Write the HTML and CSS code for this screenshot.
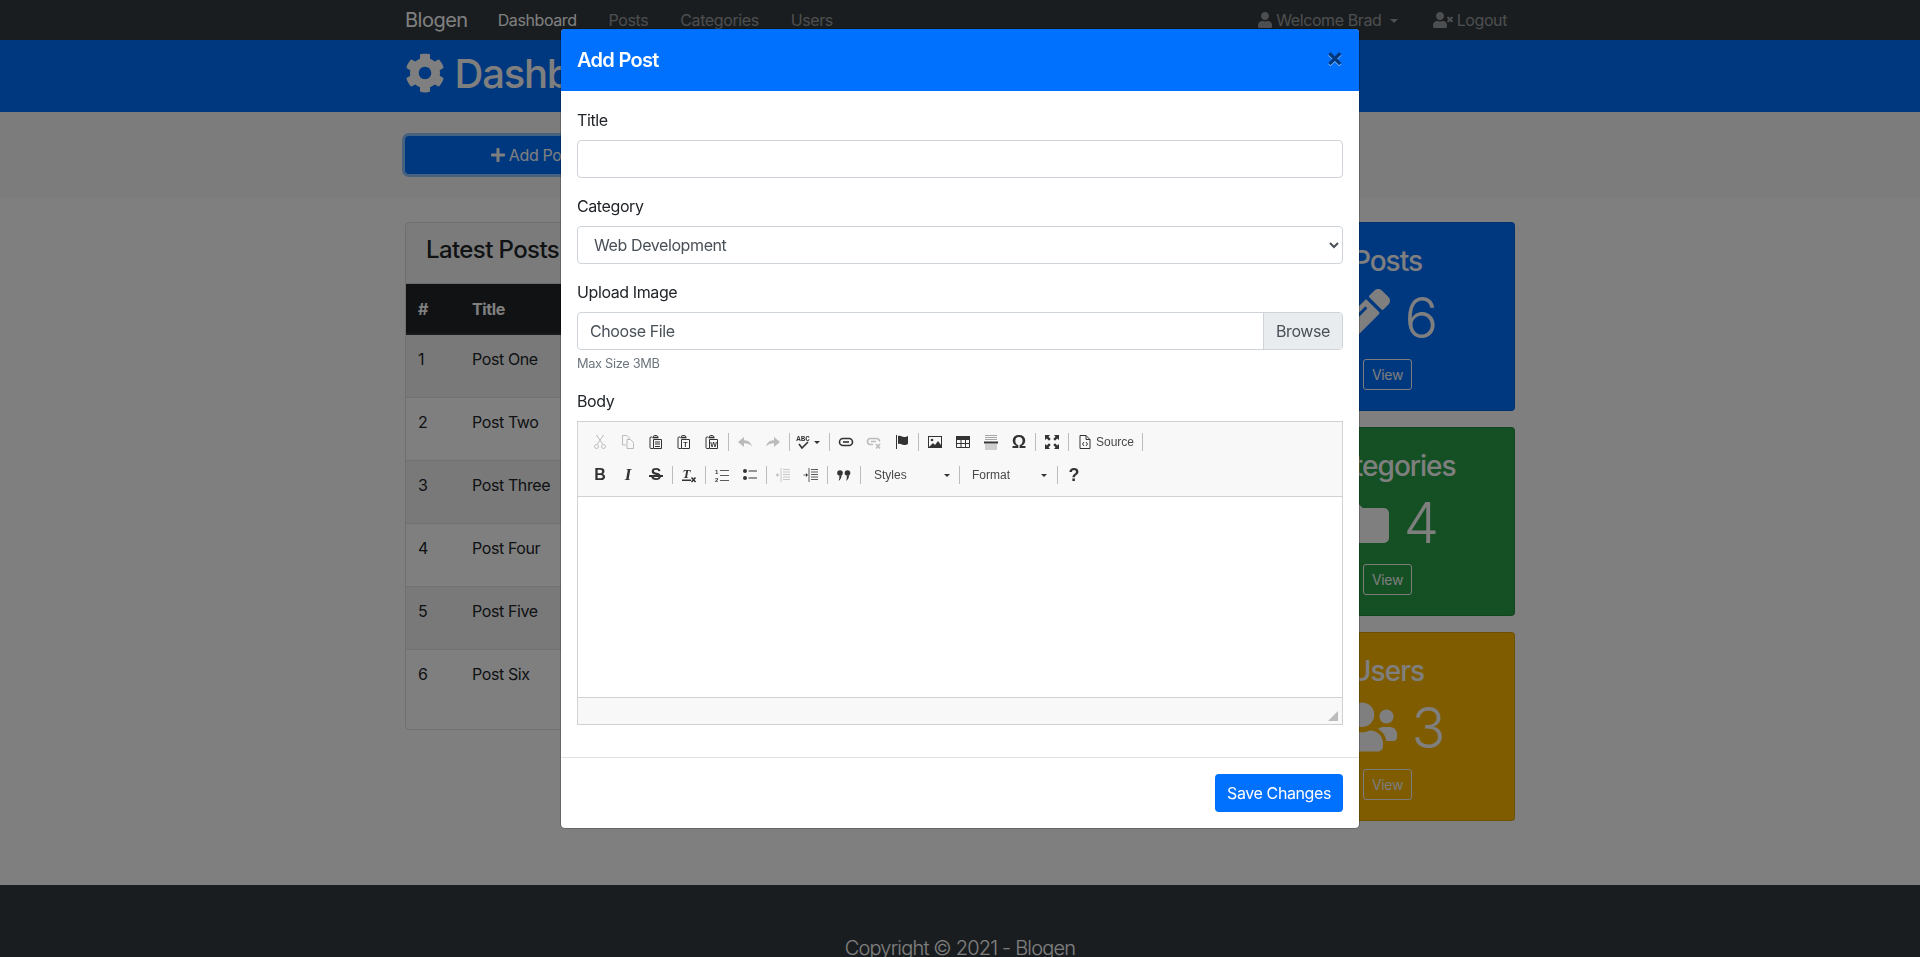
FILE: index.html
```html
<!DOCTYPE html>
<html lang="en">
<head>
<meta charset="UTF-8">
<meta name="viewport" content="width=device-width, initial-scale=1.0">
<title>Blogen Admin</title>
<link rel="stylesheet" href="styles.css">
</head>

<body>
<nav class="navbar">
    <div class="container navbar-inner">
        <a class="brand">Blogen</a>
        <a class="nav-link active">Dashboard</a>
        <a class="nav-link">Posts</a>
        <a class="nav-link">Categories</a>
        <a class="nav-link">Users</a>
        <a class="nav-link push-right">
            <svg class="fa" viewBox="0 0 448 512"><path d="M224 256c70.7 0 128-57.3 128-128S294.7 0 224 0 96 57.3 96 128s57.3 128 128 128zm89.6 32h-16.7c-22.2 10.2-46.9 16-72.9 16s-50.6-5.8-72.9-16h-16.7C60.2 288 0 348.2 0 422.4V464c0 26.5 21.5 48 48 48h352c26.5 0 48-21.5 48-48v-41.6c0-74.2-60.2-134.4-134.4-134.4z"/></svg>
            Welcome Brad <span class="caret"></span>
        </a>
        <a class="nav-link last">
            <svg class="fa" viewBox="0 0 640 512"><path d="M589.6 240l45.6-45.6c6.3-6.3 6.3-16.5 0-22.8l-22.8-22.8c-6.3-6.3-16.5-6.3-22.8 0L544 194.4l-45.6-45.6c-6.3-6.3-16.5-6.3-22.8 0l-22.8 22.8c-6.3 6.3-6.3 16.5 0 22.8l45.6 45.6-45.6 45.6c-6.3 6.3-6.3 16.5 0 22.8l22.8 22.8c6.3 6.3 16.5 6.3 22.8 0l45.6-45.6 45.6 45.6c6.3 6.3 16.5 6.3 22.8 0l22.8-22.8c6.3-6.3 6.3-16.5 0-22.8L589.6 240zM224 256c70.7 0 128-57.3 128-128S294.7 0 224 0 96 57.3 96 128s57.3 128 128 128zm89.6 32h-16.7c-22.2 10.2-46.9 16-72.9 16s-50.6-5.8-72.9-16h-16.7C60.2 288 0 348.2 0 422.4V464c0 26.5 21.5 48 48 48h352c26.5 0 48-21.5 48-48v-41.6c0-74.2-60.2-134.4-134.4-134.4z"/></svg>
            Logout
        </a>
    </div>
</nav>

<header class="page-header">
    <div class="container">
        <h1>
            <svg class="fa" viewBox="0 0 512 512"><path d="M487.4 315.7l-42.6-24.6c4.3-23.2 4.3-47 0-70.2l42.6-24.6c4.9-2.8 7.1-8.6 5.5-14-11.1-35.6-30-67.8-54.7-94.6-3.8-4.1-10-5.1-14.8-2.3L380.8 110c-17.9-15.4-38.5-27.3-60.8-35.1V25.8c0-5.6-3.9-10.5-9.4-11.7-36.7-8.2-74.3-7.8-109.2 0-5.5 1.2-9.4 6.1-9.4 11.7V75c-22.2 7.9-42.8 19.8-60.8 35.1L88.7 85.5c-4.9-2.8-11-1.9-14.8 2.3-24.7 26.7-43.6 58.9-54.7 94.6-1.7 5.4.6 11.2 5.5 14L67.3 221c-4.3 23.2-4.3 47 0 70.2l-42.6 24.6c-4.9 2.8-7.1 8.6-5.5 14 11.1 35.6 30 67.8 54.7 94.6 3.8 4.1 10 5.1 14.8 2.3l42.6-24.6c17.9 15.4 38.5 27.3 60.8 35.1v49.2c0 5.6 3.9 10.5 9.4 11.7 36.7 8.2 74.3 7.8 109.2 0 5.5-1.2 9.4-6.1 9.4-11.7v-49.2c22.2-7.9 42.8-19.8 60.8-35.1l42.6 24.6c4.9 2.8 11 1.9 14.8-2.3 24.7-26.7 43.6-58.9 54.7-94.6 1.5-5.5-.7-11.3-5.6-14.1zM256 336c-44.1 0-80-35.9-80-80s35.9-80 80-80 80 35.9 80 80-35.9 80-80 80z"/></svg>
            Dashboard
        </h1>
    </div>
</header>

<section class="actions">
    <div class="container">
        <a class="btn-add">
            <svg class="fa" viewBox="0 0 448 512"><path d="M416 208H272V64c0-17.67-14.33-32-32-32h-32c-17.67 0-32 14.33-32 32v144H32c-17.67 0-32 14.33-32 32v32c0 17.67 14.33 32 32 32h144v144c0 17.67 14.33 32 32 32h32c17.67 0 32-14.33 32-32V304h144c17.67 0 32-14.33 32-32v-32c0-17.67-14.33-32-32-32z"/></svg>
            Add Post
        </a>
    </div>
</section>

<main class="container content">
    <div class="posts-card">
        <h4 class="posts-title">Latest Posts</h4>
        <table class="posts-table">
            <thead>
                <tr><th class="col-num">#</th><th>Title</th></tr>
            </thead>
            <tbody>
                <tr><td>1</td><td>Post One</td></tr>
                <tr><td>2</td><td>Post Two</td></tr>
                <tr><td>3</td><td>Post Three</td></tr>
                <tr><td>4</td><td>Post Four</td></tr>
                <tr><td>5</td><td>Post Five</td></tr>
                <tr><td>6</td><td>Post Six</td></tr>
            </tbody>
        </table>
    </div>

    <div class="stats">
        <div class="stat stat-blue">
            <h3>Posts</h3>
            <div class="stat-num">
                <svg class="fa" viewBox="0 0 512 512"><path d="M497.9 142.1l-46.1 46.1c-4.7 4.7-12.3 4.7-17 0l-111-111c-4.7-4.7-4.7-12.3 0-17l46.1-46.1c18.7-18.7 49.1-18.7 67.9 0l60.1 60.1c18.8 18.7 18.8 49.1 0 67.9zM284.2 99.8L21.6 362.4.4 483.9c-2.9 16.4 11.4 30.6 27.8 27.8l121.5-21.3 262.6-262.6c4.7-4.7 4.7-12.3 0-17l-111-111c-4.8-4.7-12.4-4.7-17.1 0zM124.1 339.9c-5.5-5.5-5.5-14.3 0-19.8l154-154c5.5-5.5 14.3-5.5 19.8 0s5.5 14.3 0 19.8l-154 154c-5.5 5.5-14.3 5.5-19.8 0zM88 424h48v36.3l-64.5 11.3-31.1-31.1L51.7 376H88v48z"/></svg>
                6
            </div>
            <a class="btn-view">View</a>
        </div>
        <div class="stat stat-green">
            <h3>Categories</h3>
            <div class="stat-num">
                <svg class="fa" viewBox="0 0 512 512"><path d="M464 128H272l-64-64H48C21.49 64 0 85.49 0 112v288c0 26.51 21.49 48 48 48h416c26.51 0 48-21.49 48-48V176c0-26.51-21.49-48-48-48z"/></svg>
                4
            </div>
            <a class="btn-view">View</a>
        </div>
        <div class="stat stat-yellow">
            <h3>Users</h3>
            <div class="stat-num">
                <svg class="fa" viewBox="0 0 640 512"><path d="M96 224c35.3 0 64-28.7 64-64s-28.7-64-64-64-64 28.7-64 64 28.7 64 64 64zm448 0c35.3 0 64-28.7 64-64s-28.7-64-64-64-64 28.7-64 64 28.7 64 64 64zm32 32h-64c-17.6 0-33.5 7.1-45.1 18.6 40.3 22.1 68.9 62 75.1 109.4h66c17.7 0 32-14.3 32-32v-32c0-35.3-28.7-64-64-64zm-256 0c61.9 0 112-50.1 112-112S381.9 32 320 32 208 82.1 208 144s50.1 112 112 112zm76.8 32h-8.3c-20.8 10-43.9 16-68.5 16s-47.6-6-68.5-16h-8.3C179.6 288 128 339.6 128 403.2V432c0 26.5 21.5 48 48 48h288c26.5 0 48-21.5 48-48v-28.8c0-63.6-51.6-115.2-115.2-115.2zm-223.7-13.4C161.5 263.1 145.6 256 128 256H64c-35.3 0-64 28.7-64 64v32c0 17.7 14.3 32 32 32h65.9c6.3-47.4 34.9-87.3 75.2-109.4z"/></svg>
                3
            </div>
            <a class="btn-view">View</a>
        </div>
    </div>
</main>

<footer class="footer">
    <p>Copyright &copy; 2021 - Blogen</p>
</footer>

<div class="backdrop"></div>

<div class="modal">
    <div class="modal-box">
        <div class="modal-header">
            <h5>Add Post</h5>
            <span class="close">&times;</span>
        </div>
        <div class="modal-body">
            <div class="form-group">
                <label>Title</label>
                <input class="form-control" type="text">
            </div>
            <div class="form-group">
                <label>Category</label>
                <select class="form-control form-select">
                    <option>Web Development</option>
                </select>
            </div>
            <div class="form-group">
                <label>Upload Image</label>
                <div class="file-input">
                    <span class="file-name">Choose File</span>
                    <span class="file-browse">Browse</span>
                </div>
                <small class="hint">Max Size 3MB</small>
            </div>
            <div class="form-group">
                <label>Body</label>
                <div class="editor">
                    <div class="toolbar">
                        <div class="tool-row">
                            <span class="tool off"><svg class="ico" viewBox="0 0 16 16"><path class="ln" d="M4.5 1l6 9M11.5 1l-6 9"/><circle class="ln" cx="4.5" cy="12.5" r="2"/><circle class="ln" cx="11.5" cy="12.5" r="2"/></svg></span>
                            <span class="tool off"><svg class="ico" viewBox="0 0 16 16"><path class="ln" d="M6 11H2.500V1.500H7L9 3.500V5M7 5.500h3.500l3 3v6H7z"/></svg></span>
                            <span class="tool"><svg class="ico" viewBox="0 0 16 16"><path class="ln" d="M4 3H3a1 1 0 0 0-1 1v9.500a1 1 0 0 0 1 1h2M5.500 3.500v-1a1 1 0 0 1 1-1h2a1 1 0 0 1 1 1v1"/><path class="ln-bold" d="M4.500 3.500h6"/><path class="ln" d="M5.500 5.500h8v9h-8z"/><path class="ln" d="M7 8h5M7 10h5M7 12.500h5"/></svg></span>
                            <span class="tool"><svg class="ico" viewBox="0 0 16 16"><path class="ln" d="M4 3H3a1 1 0 0 0-1 1v9.500a1 1 0 0 0 1 1h2M5.500 3.500v-1a1 1 0 0 1 1-1h2a1 1 0 0 1 1 1v1"/><path class="ln-bold" d="M4.500 3.500h6"/><path class="ln" d="M5.500 5.500h8v9h-8z"/><text class="ico-letter" x="9.500" y="13">T</text></svg></span>
                            <span class="tool"><svg class="ico" viewBox="0 0 16 16"><path class="ln" d="M4 3H3a1 1 0 0 0-1 1v9.500a1 1 0 0 0 1 1h2M5.500 3.500v-1a1 1 0 0 1 1-1h2a1 1 0 0 1 1 1v1"/><path class="ln-bold" d="M4.500 3.500h6"/><path class="ln" d="M5.500 5.500h8v9h-8z"/><text class="ico-letter" x="9.500" y="13">W</text></svg></span>
                            <span class="tool-sep"></span>
                            <span class="tool off"><svg class="ico" viewBox="0 0 16 16"><path d="M1 8l6-5v3.200c4 0 7 2 8 6.300-2-2.300-4.500-3.200-8-3.200V13z"/></svg></span>
                            <span class="tool off"><svg class="ico" viewBox="0 0 16 16"><path d="M15 8L9 3v3.200c-4 0-7 2-8 6.300 2-2.300 4.500-3.200 8-3.200V13z"/></svg></span>
                            <span class="tool-sep"></span>
                            <span class="tool tool-spell"><svg class="ico" viewBox="0 0 16 16"><text class="ico-abc" x="8" y="7">ABC</text><path class="ln-bold" d="M4 10l3 4 6-6"/></svg><span class="arrow"></span></span>
                            <span class="tool-sep"></span>
                            <span class="tool"><svg class="ico" viewBox="0 0 16 16"><rect class="ln-bold" x="1.500" y="4.500" width="13" height="7" rx="3.500"/><path class="ln-bold" d="M5 8h6"/></svg></span>
                            <span class="tool off"><svg class="ico" viewBox="0 0 16 16"><path class="ln-bold" d="M7 10.500H4.500a3 3 0 0 1 0-6h6a3 3 0 0 1 3 3"/><path class="ln-bold" d="M5 7.500h5M10 10l4 4.500M14 10l-4 4.500"/></svg></span>
                            <span class="tool"><svg class="ico" viewBox="0 0 16 16"><path d="M2 1h1v14H2zM4 2c3-1 4 1 6 1s3-.5 4-1v8c-1 .5-2 1-4 1S7 9 4 10z"/></svg></span>
                            <span class="tool-sep"></span>
                            <span class="tool"><svg class="ico" viewBox="0 0 16 16"><rect class="ln" x="1.500" y="2.500" width="13" height="11"/><circle cx="5" cy="6" r="1.300"/><path d="M2 13l4-4 2 2 3-4 3 4v2z"/></svg></span>
                            <span class="tool"><svg class="ico" viewBox="0 0 16 16"><rect x="1" y="2" width="14" height="4"/><path class="ln" d="M1.500 5v8.500h13V5M1.500 9.500h13M6 6v7.500M10.500 6v7.500"/></svg></span>
                            <span class="tool"><svg class="ico" viewBox="0 0 16 16"><path class="ln-faint" d="M2 1.500h12M2 3.500h12M2 5.500h12M2 11h12M2 13h12M2 15h12"/><rect x="1" y="7.500" width="14" height="2"/></svg></span>
                            <span class="tool"><span class="glyph glyph-omega">&Omega;</span></span>
                            <span class="tool-sep"></span>
                            <span class="tool"><svg class="ico" viewBox="0 0 16 16"><path d="M1 1h5L4.500 2.800 6.700 5 5 6.700 2.800 4.500 1 6zM15 1v5l-1.800-1.500L11 6.700 9.300 5l2.200-2.200L10 1zM1 15v-5l1.800 1.500L5 9.300 6.700 11l-2.200 2.200L6 15zM15 15h-5l1.500-1.800L9.300 11l1.700-1.700 2.200 2.200L15 10z"/></svg></span>
                            <span class="tool-sep"></span>
                            <span class="tool tool-source"><svg class="ico" viewBox="0 0 16 16"><path class="ln" d="M3 1.500h6l4 4v9H3zM9 1.500v4h4"/><path class="ln" d="M7 8L5.500 10 7 12M9 8l1.500 2L9 12"/></svg><span class="tool-label">Source</span></span>
                            <span class="tool-sep"></span>
                        </div>
                        <div class="tool-row">
                            <span class="tool"><span class="glyph glyph-b">B</span></span>
                            <span class="tool"><span class="glyph glyph-i">I</span></span>
                            <span class="tool"><span class="glyph glyph-s">S</span></span>
                            <span class="tool-sep"></span>
                            <span class="tool"><svg class="ico" viewBox="0 0 16 16"><text class="ico-tx" x="1.500" y="11">T</text><rect x="1" y="12.500" width="9" height="1.500"/><path class="ln-bold" d="M10.500 10.500l4 4.500M14.500 10.500l-4 4.500"/></svg></span>
                            <span class="tool-sep"></span>
                            <span class="tool"><svg class="ico" viewBox="0 0 16 16"><text class="ico-num" x="1" y="6.500">1</text><text class="ico-num" x="1" y="14.500">2</text><path class="ln-thin" d="M6 3.500h9M6 8.500h9M6 13.500h9"/></svg></span>
                            <span class="tool"><svg class="ico" viewBox="0 0 16 16"><circle cx="3" cy="4" r="2"/><circle cx="3" cy="11" r="2"/><path class="ln" d="M6.500 4h8.500M6.500 11h8.500"/></svg></span>
                            <span class="tool-sep"></span>
                            <span class="tool off"><svg class="ico" viewBox="0 0 16 16"><path class="ln-thin" d="M8 2.500h7M8 5h7M8 7.500h7M8 10h7M8 12.500h7M6 1v14M1 8h3.500"/><path d="M1 8l2-2v4z"/></svg></span>
                            <span class="tool"><svg class="ico" viewBox="0 0 16 16"><path class="ln-thin" d="M8 2.500h7M8 5h7M8 7.500h7M8 10h7M8 12.500h7M6 1v14M0.500 8H4"/><path d="M5 8L3 6v4z"/></svg></span>
                            <span class="tool-sep"></span>
                            <span class="tool"><svg class="ico" viewBox="0 0 16 16"><circle cx="4" cy="6" r="2.800"/><path d="M5.500 8c.3 2-.8 4.500-3 6 .8-1.500 1-3 .8-5z"/><circle cx="11.500" cy="6" r="2.800"/><path d="M13 8c.3 2-.8 4.500-3 6 .8-1.500 1-3 .8-5z"/></svg></span>
                            <span class="tool-sep"></span>
                            <span class="combo combo-styles"><span class="tool-label">Styles</span><span class="arrow"></span></span>
                            <span class="tool-sep"></span>
                            <span class="combo combo-format"><span class="tool-label">Format</span><span class="arrow"></span></span>
                            <span class="tool-sep"></span>
                            <span class="tool"><span class="glyph glyph-help">?</span></span>
                        </div>
                    </div>
                    <div class="editor-area"></div>
                    <div class="editor-foot"><span class="resizer"></span></div>
                </div>
            </div>
        </div>
        <div class="modal-footer">
            <a class="btn-save">Save Changes</a>
        </div>
    </div>
</div>
</body>
</html>
```

FILE: styles.css
```css
* {
    box-sizing: border-box;
    letter-spacing: -.025em;
}
html, body {
    height: 100%;
}
body {
    margin: 0;
    overflow: hidden;
    font-family: Inter, "Liberation Sans", sans-serif;
    font-size: 16px;
    line-height: 1.5;
    color: #212529;
    background-color: #fff;
}
.container {
    width: 1110px;
    margin: 0 auto;
}
.fa {
    height: 1em;
    width: auto;
    fill: currentColor;
    vertical-align: -0.125em;
}

/* navbar */
.navbar {
    background-color: #343a40;
    height: 40px;
}
.navbar-inner {
    display: flex;
    align-items: center;
    height: 40px;
}
.brand {
    color: #fff;
    font-size: 20px;
    margin-right: 14px;
}
.nav-link {
    color: rgba(255, 255, 255, .5);
    padding: 8px 16px;
}
.nav-link.active {
    color: #fff;
}
.nav-link.push-right {
    margin-left: auto;
}
.nav-link.last {
    padding: 8px 8px 8px 15px;
}
.caret {
    display: inline-block;
    margin: 0 4px 0 4px;
    vertical-align: 3px;
    border-top: 4px solid;
    border-left: 4px solid transparent;
    border-right: 4px solid transparent;
}

/* page header */
.page-header {
    background-color: #0070ff;
    color: #fff;
    height: 72px;
    padding-top: 10px;
}
.page-header h1 {
    margin: 0;
    font-size: 40px;
    font-weight: 500;
    line-height: 48px;
    letter-spacing: -.03em;
}
.actions {
    background-color: #f8f9fa;
    padding: 24px 0;
    height: 86px;
}
.btn-add {
    display: block;
    width: 255px;
    height: 38px;
    line-height: 38px;
    text-align: center;
    color: #fff;
    background-color: #0070ff;
    border-radius: 4px;
    box-shadow: 0 0 0 3px rgba(38, 143, 255, .5);
}

/* main content */
.content {
    display: grid;
    grid-template-columns: 825px 255px;
    gap: 30px;
    padding: 24px 0 16px;
    align-items: start;
}
.posts-card {
    border: 1px solid rgba(0, 0, 0, .125);
    border-radius: 4px;
    padding-bottom: 16px;
}
.posts-title {
    margin: 0;
    padding: 13px 20px 18px;
    font-size: 24px;
    font-weight: 500;
    line-height: 28.8px;
    background-color: rgba(0, 0, 0, .03);
    border-bottom: 1px solid rgba(0, 0, 0, .125);
}
.posts-table {
    width: 100%;
    border-collapse: collapse;
    table-layout: fixed;
}
.posts-table th {
    background-color: #212529;
    color: #fff;
    font-weight: 700;
    text-align: left;
    padding: 13px 12px 12px;
    border-bottom: 2px solid #32383e;
}
.posts-table th.col-num {
    width: 54px;
}
.posts-table td {
    height: 63px;
    padding: 12px;
    vertical-align: top;
    border-top: 1px solid #dee2e6;
}
.posts-table tbody tr:first-child td {
    height: 64px;
    border-top: 0;
}
.posts-table tbody tr:nth-child(odd) {
    background-color: rgba(0, 0, 0, .05);
}
.stats {
    display: flex;
    flex-direction: column;
    gap: 16px;
}
.stat {
    display: flex;
    flex-direction: column;
    align-items: center;
    height: 189px;
    padding: 22px 20px 0;
    border: 1px solid rgba(0, 0, 0, .125);
    border-radius: 4px;
    color: #fff;
}
.stat-blue {
    background-color: #0070ff;
}
.stat-green {
    background-color: #28a046;
}
.stat-yellow {
    background-color: #ffb900;
}
.stat h3 {
    margin: 0 0 6px;
    font-size: 28px;
    font-weight: 500;
    line-height: 33.6px;
    letter-spacing: -.035em;
}
.stat-num {
    padding-right: 4px;
    font-size: 56px;
    font-weight: 300;
    line-height: 67.2px;
    margin-bottom: 7px;
}
.btn-view {
    display: block;
    width: 49px;
    height: 31px;
    font-size: 14px;
    line-height: 29px;
    text-align: center;
    color: #f8f9fa;
    border: 1px solid #f8f9fa;
    border-radius: 3px;
}

/* footer */
.footer {
    margin-top: 48px;
    padding: 48px 0;
    background-color: #343a40;
    color: #fff;
    text-align: center;
}
.footer p {
    margin: 0;
    font-size: 20px;
    font-weight: 300;
    line-height: 30px;
    letter-spacing: -.04em;
}

/* modal */
.backdrop {
    position: fixed;
    top: 0;
    left: 0;
    right: 0;
    bottom: 0;
    background-color: rgba(0, 0, 0, .5);
}
.modal {
    position: fixed;
    top: 0;
    left: 0;
    right: 0;
    bottom: 0;
    display: flex;
    justify-content: center;
    align-items: flex-start;
    padding-top: 28px;
}
.modal-box {
    width: 800px;
    background-color: #fff;
    border: 1px solid rgba(0, 0, 0, .2);
    border-radius: 5px;
    background-clip: padding-box;
}
.modal-header {
    display: flex;
    justify-content: space-between;
    align-items: center;
    height: 62px;
    padding: 0 16px;
    background-color: #0070ff;
    color: #fff;
    border-radius: 4px 4px 0 0;
}
.modal-header h5 {
    margin: 0;
    font-size: 20px;
    font-weight: 600;
    line-height: 30px;
    letter-spacing: -.035em;
}
.close {
    padding-bottom: 4px;
    font-size: 26px;
    font-weight: 700;
    line-height: 1;
    color: #000;
    opacity: .5;
    text-shadow: 0 1px 0 #fff;
}
.modal-body {
    padding: 17px 16px 32px;
}
.form-group {
    margin-bottom: 16px;
}
.form-group:last-child {
    margin-bottom: 0;
}
.form-group label {
    display: block;
    margin-bottom: 8px;
}
.form-control {
    display: block;
    width: 100%;
    height: 38px;
    padding: 6px 12px;
    font-family: inherit;
    font-size: 16px;
    color: #495057;
    background-color: #fff;
    border: 1px solid #ced4da;
    border-radius: 4px;
}
.file-input {
    display: flex;
    height: 38px;
    border: 1px solid #ced4da;
    border-radius: 4px;
    color: #495057;
    overflow: hidden;
}
.file-name {
    flex: 1;
    padding: 6px 12px;
}
.file-browse {
    width: 79px;
    padding: 6px 0;
    text-align: center;
    background-color: #e9ecef;
    border-left: 1px solid #ced4da;
}
.hint {
    display: block;
    margin-top: 4px;
    font-size: 12.8px;
    line-height: 19px;
    color: #6c757d;
}

/* rich text editor */
.editor {
    border: 1px solid #d1d1d1;
    font-family: "Liberation Sans", Arial, sans-serif;
}
.editor * {
    letter-spacing: 0;
}
.toolbar {
    height: 75px;
    padding: 8px 8px 0;
    background-color: #f8f8f8;
    border-bottom: 1px solid #d1d1d1;
    display: flex;
    flex-direction: column;
    gap: 9px;
}
.tool-row {
    display: flex;
    align-items: center;
    height: 24px;
}
.tool {
    display: flex;
    align-items: center;
    justify-content: center;
    width: 28px;
    height: 24px;
    color: #333;
}
.tool.off {
    opacity: .3;
}
.tool-sep {
    width: 1px;
    height: 18px;
    margin: 0 2px;
    background-color: #bcbcbc;
}
.tool-spell {
    width: 35px;
    justify-content: flex-start;
    padding-left: 3px;
}
.tool-source {
    width: 69px;
    justify-content: flex-start;
    padding-left: 6px;
}
.tool-label {
    font-size: 12px;
    line-height: 16px;
    color: #484848;
}
.tool-source .tool-label {
    margin-left: 3px;
}
.ico {
    width: 16px;
    height: 16px;
    flex: none;
    fill: #333;
}
.ln, .ln-bold, .ln-thin, .ln-faint {
    fill: none;
    stroke: #333;
    stroke-width: 1;
}
.ln-bold {
    stroke-width: 1.600;
}
.ln-thin {
    stroke-width: .8;
}
.ln-faint {
    stroke-width: .7;
    stroke-opacity: .6;
}
.ico-letter {
    font: 700 7px "Liberation Sans", sans-serif;
    text-anchor: middle;
}
.ico-abc {
    font: 700 7.500px "Liberation Mono", monospace;
    text-anchor: middle;
}
.ico-tx {
    font: italic 700 13px "Liberation Serif", serif;
}
.ico-num {
    font: 700 6px "Liberation Sans", sans-serif;
}
.arrow {
    display: inline-block;
    margin-left: 3px;
    border-top: 3px solid #333;
    border-left: 3px solid transparent;
    border-right: 3px solid transparent;
}
.glyph {
    color: #333;
    line-height: 16px;
}
.glyph-b {
    font: 700 16px/16px "Liberation Sans", sans-serif;
}
.glyph-i {
    font: italic 700 17px/16px "Liberation Serif", serif;
}
.glyph-s {
    position: relative;
    font: 700 16px/16px "Liberation Sans", sans-serif;
}
.glyph-s::after {
    content: "";
    position: absolute;
    left: -2px;
    right: -2px;
    top: 8px;
    height: 1.500px;
    background-color: #333;
}
.glyph-omega {
    font: 700 18px/16px "Liberation Sans", sans-serif;
}
.glyph-help {
    font: 700 18px/16px "Liberation Sans", sans-serif;
}
.combo {
    display: flex;
    align-items: center;
    justify-content: space-between;
    height: 24px;
}
.combo-styles {
    width: 94px;
    padding: 0 7px 0 11px;
}
.combo-format {
    width: 93px;
    padding: 0 8px 0 10px;
}
.editor-area {
    height: 200px;
    background-color: #fff;
}
.editor-foot {
    display: flex;
    justify-content: flex-end;
    align-items: flex-end;
    height: 27px;
    padding: 0 4px 3px 0;
    background-color: #f8f8f8;
    border-top: 1px solid #d1d1d1;
}
.resizer {
    border-bottom: 10px solid #bcbcbc;
    border-left: 10px solid transparent;
}
.modal-footer {
    display: flex;
    justify-content: flex-end;
    padding: 16px;
    border-top: 1px solid #dee2e6;
}
.btn-save {
    height: 38px;
    padding: 7px 12px 5px;
    color: #fff;
    background-color: #0070ff;
    border-radius: 4px;
}
```
